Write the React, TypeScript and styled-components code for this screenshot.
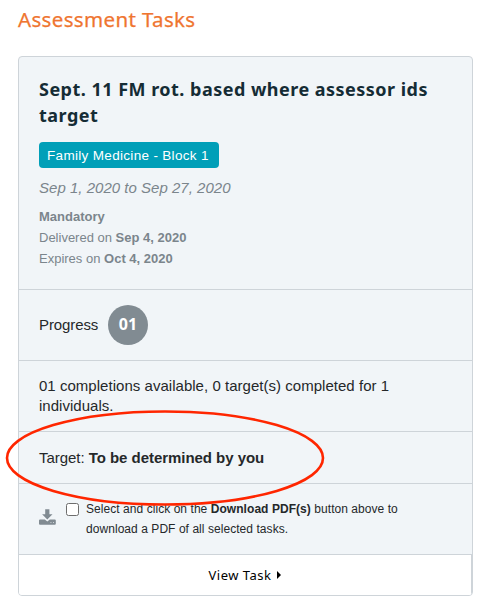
import React from "react";
import styled, { createGlobalStyle } from "styled-components";

const GlobalStyle = createGlobalStyle`
  *, *::before, *::after { box-sizing: border-box; }
  body { margin: 0; background: #fff; color: #25282a; font-family: "Liberation Sans", Arial, sans-serif; }
`;

const Page = styled.main`
  position: relative;
  width: 491px;
  height: 614px;
  padding: 4px 18px 0;
  overflow: hidden;
`;

const PageTitle = styled.h1`
  margin: 0 0 22px;
  height: 30px;
  font: 400 20.5px/30px "Noto Sans", sans-serif;
  letter-spacing: 0.35px;
  color: #ef7530;
  -webkit-text-stroke: 0.25px #ef7530;
  white-space: nowrap;
`;

const Card = styled.article`
  width: 455px;
  height: 540px;
  border: 1px solid #ced4d9;
  border-radius: 4px;
  background: #f1f5f8;
  overflow: hidden;
`;

const Section = styled.section<{ $height: number; $top?: number }>`
  height: ${(p) => p.$height}px;
  padding: ${(p) => p.$top ?? 0}px 20px 0;
  border-bottom: 1px solid #ced4d9;
  white-space: nowrap;
`;

const TaskTitle = styled.h2`
  margin: 0;
  font: 700 18px/26px "Noto Sans", sans-serif;
  letter-spacing: 0.48px;
  color: #152c35;
`;

const Badge = styled.div`
  width: 180px;
  height: 26px;
  margin-top: 14px;
  padding-left: 8px;
  border-radius: 4px;
  background: #009fb8;
  color: #fff;
  font-size: 13.5px;
  line-height: 27px;
  letter-spacing: 0.32px;
`;

const DateRange = styled.div`
  margin-top: 9px;
  font-size: 15px;
  font-style: italic;
  line-height: 22px;
  letter-spacing: 0.02px;
  color: #7b858c;
`;

const Details = styled.div`
  margin-top: 7px;
  font-size: 13px;
  line-height: 21px;
  color: #7b858c;
`;

const ProgressRow = styled.div`
  display: flex;
  align-items: center;
  gap: 10px;
  height: 40px;
  font-size: 15px;
`;

const ProgressLabel = styled.span`
  width: 59px;
  padding-bottom: 1px;
  letter-spacing: -0.1px;
`;

const Count = styled.span`
  width: 40px;
  height: 40px;
  border-radius: 50%;
  background: #818b92;
  color: #fff;
  font: 700 16px/39px "Noto Sans", sans-serif;
  text-align: center;
`;

const Body = styled.div<{ $tracking?: number }>`
  font-size: 15px;
  line-height: 20px;
  letter-spacing: ${(p) => p.$tracking ?? 0}px;
`;

const DownloadRow = styled.div`
  display: flex;
  align-items: flex-start;
`;

const DownloadIcon = styled.svg`
  width: 17px;
  height: 17px;
  margin-top: 10px;
  flex: none;
`;

const Checkbox = styled.input`
  appearance: none;
  width: 13px;
  height: 13px;
  margin: 4px 7px 0 10px;
  border: 1px solid #6d6d6d;
  border-radius: 2.5px;
  background: #fff;
  flex: none;
`;

const Hint = styled.label`
  font-size: 12px;
  line-height: 20px;
  letter-spacing: 0.055px;
`;

const ViewTask = styled.button`
  display: flex;
  align-items: center;
  justify-content: center;
  gap: 6px;
  width: 453px;
  height: 41px;
  padding: 0 0 1px;
  border: 0;
  border-right: 1px solid #ced4d9;
  background: #fff;
  color: #000;
  font: 400 13px/20px "Noto Sans", sans-serif;
  letter-spacing: 0.5px;
`;

const Annotation = styled.svg`
  position: absolute;
  left: 0;
  top: 400px;
  width: 330px;
  height: 112px;
  pointer-events: none;
`;

export default function App() {
  return (
    <>
      <GlobalStyle />
      <Page>
        <PageTitle>Assessment Tasks</PageTitle>
        <Card>
          <Section $height={233} $top={19}>
            <TaskTitle>
              Sept. 11 FM rot. based where assessor ids
              <br />
              target
            </TaskTitle>
            <Badge>Family Medicine - Block 1</Badge>
            <DateRange>Sep 1, 2020 to Sep 27, 2020</DateRange>
            <Details>
              <div><b>Mandatory</b></div>
              <div>Delivered on <b>Sep 4, 2020</b></div>
              <div>Expires on <b>Oct 4, 2020</b></div>
            </Details>
          </Section>
          <Section $height={71} $top={15}>
            <ProgressRow>
              <ProgressLabel>Progress</ProgressLabel>
              <Count>01</Count>
            </ProgressRow>
          </Section>
          <Section $height={71} $top={15}>
            <Body $tracking={0.03}>
              01 completions available, 0 target(s) completed for 1
              <br />
              individuals.
            </Body>
          </Section>
          <Section $height={52} $top={16}>
            <Body $tracking={-0.04}>Target: <b>To be determined by you</b></Body>
          </Section>
          <Section $height={71} $top={15}>
            <DownloadRow>
              <DownloadIcon viewBox="0 0 17 17" aria-hidden="true">
                <path fill="#818b92" d="M6.2.3h4.2v5h3.1L8.3 10.5 3.1 5.3h3.1z" />
                <path
                  fill="#818b92"
                  fillRule="evenodd"
                  d="M1 10.6h4.8l2.5 2 2.5-2h5q1 0 1 1v3.2q0 1-1 1H1q-1 0-1-1v-3.2q0-1 1-1zM11.5 13.2v.9h.9v-.9zm2.6 0v.9h.9v-.9z"
                />
              </DownloadIcon>
              <Checkbox type="checkbox" id="download" />
              <Hint htmlFor="download">
                Select and click on the <b>Download PDF(s)</b> button above to
                <br />
                download a PDF of all selected tasks.
              </Hint>
            </DownloadRow>
          </Section>
          <ViewTask>
            View Task
            <svg width="4" height="8" viewBox="0 0 4 8" aria-hidden="true">
              <path d="M0 0l4 4-4 4z" />
            </svg>
          </ViewTask>
        </Card>
        <Annotation viewBox="0 0 330 112" aria-hidden="true">
          <ellipse cx="165" cy="58" rx="158" ry="46.5" fill="none" stroke="#ff2600" strokeWidth="2.6" />
        </Annotation>
      </Page>
    </>
  );
}
